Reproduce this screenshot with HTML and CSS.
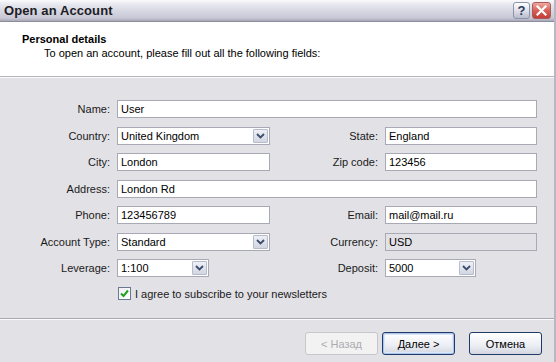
FILE: index.html
```html
<!DOCTYPE html>
<html>
<head>
<meta charset="utf-8">
<link rel="stylesheet" href="styles.css">
</head>
<body>
<div class="window">
  <div class="titlebar">
    <span class="title">Open an Account</span>
    <div class="tb-buttons">
      <span class="tb-btn help">?</span>
      <span class="tb-btn close">
        <svg width="11" height="11" viewBox="0 0 11 11"><path d="M1.5 1.5 L9.5 9.5 M9.5 1.5 L1.5 9.5" stroke="#fff" stroke-width="2.2" stroke-linecap="square"/></svg>
      </span>
    </div>
  </div>
  <div class="header">
    <div class="h-title">Personal details</div>
    <div class="h-sub">To open an account, please fill out all the following fields:</div>
  </div>
  <div class="body">
    <div class="form">
      <label class="lbl">Name:</label>
      <div class="field span3">User</div>

      <label class="lbl">Country:</label>
      <div class="field combo">United Kingdom<span class="arrow"><svg width="9" height="6" viewBox="0 0 9 6"><path d="M1 1 L4.5 4.5 L8 1" fill="none" stroke="#3c4c6c" stroke-width="1.8"/></svg></span></div>
      <label class="lbl">State:</label>
      <div class="field">England</div>

      <label class="lbl">City:</label>
      <div class="field">London</div>
      <label class="lbl">Zip code:</label>
      <div class="field">123456</div>

      <label class="lbl">Address:</label>
      <div class="field span3">London Rd</div>

      <label class="lbl">Phone:</label>
      <div class="field">123456789</div>
      <label class="lbl">Email:</label>
      <div class="field">mail@mail.ru</div>

      <label class="lbl">Account Type:</label>
      <div class="field combo">Standard<span class="arrow"><svg width="9" height="6" viewBox="0 0 9 6"><path d="M1 1 L4.5 4.5 L8 1" fill="none" stroke="#3c4c6c" stroke-width="1.8"/></svg></span></div>
      <label class="lbl">Currency:</label>
      <div class="field disabled">USD</div>

      <label class="lbl">Leverage:</label>
      <div class="cell"><div class="field combo short">1:100<span class="arrow"><svg width="9" height="6" viewBox="0 0 9 6"><path d="M1 1 L4.5 4.5 L8 1" fill="none" stroke="#3c4c6c" stroke-width="1.8"/></svg></span></div></div>
      <label class="lbl">Deposit:</label>
      <div class="cell"><div class="field combo deposit">5000<span class="arrow"><svg width="9" height="6" viewBox="0 0 9 6"><path d="M1 1 L4.5 4.5 L8 1" fill="none" stroke="#3c4c6c" stroke-width="1.8"/></svg></span></div></div>
    </div>
    <div class="agree">
      <span class="checkbox"><svg width="11" height="11" viewBox="0 0 11 11"><path d="M2 5.5 L4.5 8 L9 2.5" fill="none" stroke="#21a121" stroke-width="2"/></svg></span>
      <span>I agree to subscribe to your newsletters</span>
    </div>
  </div>
  <div class="footer">
    <button class="btn disabled">&lt; Назад</button>
    <button class="btn default">Далее &gt;</button>
    <button class="btn cancel">Отмена</button>
  </div>
</div>
</body>
</html>
```

FILE: styles.css
```css
html, body {
  margin: 0;
  padding: 0;
}
body {
  width: 556px;
  height: 362px;
  overflow: hidden;
  font-family: "Liberation Sans", Arial, sans-serif;
  font-size: 11px;
  color: #000;
}
.window {
  width: 556px;
  height: 362px;
  background: #e2e1e6;
  display: flex;
  flex-direction: column;
  box-sizing: border-box;
  border-right: 2px solid #b8b8c4;
}
.titlebar {
  height: 22px;
  box-sizing: border-box;
  display: flex;
  align-items: center;
  justify-content: space-between;
  padding: 0 4px 0 4px;
  background: linear-gradient(#fbfbfd 0%, #e8e8f0 20%, #d6d6e2 55%, #c8c8d6 85%, #a8a8b8 100%);
  border-bottom: 1px solid #8c8c9c;
}
.title {
  font-weight: bold;
  font-size: 13px;
  color: #1c1c24;
  letter-spacing: 0.1px;
}
.tb-buttons {
  display: flex;
  gap: 2px;
  margin-right: -1px;
}
.tb-btn {
  width: 17px;
  height: 17px;
  box-sizing: border-box;
  border-radius: 3px;
  display: flex;
  align-items: center;
  justify-content: center;
}
.help {
  background: linear-gradient(#ffffff, #dcdde8 55%, #b8bccc);
  border: 1px solid #8d94a8;
  color: #2c3a5c;
  font-weight: bold;
  font-size: 13px;
}
.close {
  width: 19px;
  background: linear-gradient(#f0a8a0, #d86058 50%, #c23c34);
  border: 1px solid #a85a5a;
}
.header {
  height: 55px;
  box-sizing: border-box;
  background: #fff;
  padding: 10px 0 0 22px;
  line-height: 14px;
  border-bottom: 1px solid #b4b4bc;
  box-shadow: 0 1px 0 #fafafa;
}
.h-title {
  font-weight: bold;
}
.h-sub {
  padding-left: 22px;
}
.body {
  padding-top: 23px;
  flex: 1;
}
.form {
  display: grid;
  grid-template-columns: 117px 153px 115px 152px;
  grid-auto-rows: 18px;
  row-gap: 8.5px;
}
.lbl {
  text-align: right;
  padding-right: 7px;
  line-height: 18px;
  color: #1a1a1a;
}
.form .lbl:nth-of-type(odd) {
}
.field {
  box-sizing: border-box;
  height: 18px;
  background: #fff;
  border: 1px solid #a7aab4;
  padding-left: 3px;
  line-height: 16px;
  display: flex;
  align-items: center;
  position: relative;
}
.span3 {
  grid-column: 2 / 5;
}
.disabled.field {
  background: #e2e1e6;
}
.combo {
  padding-right: 0;
}
.arrow {
  margin-left: auto;
  width: 15px;
  height: 14px;
  margin-right: 1px;
  box-sizing: border-box;
  border: 1px solid #b6bccb;
  border-radius: 1px;
  background: linear-gradient(#eef0f6, #d2d6e2);
  display: flex;
  align-items: center;
  justify-content: center;
}
.cell {
  display: flex;
}
.short {
  width: 92px;
}
.deposit {
  width: 91px;
}
.agree {
  display: flex;
  align-items: center;
  gap: 4px;
  margin: 10px 0 0 118px;
  color: #1a1a1a;
}
.checkbox {
  width: 13px;
  height: 13px;
  box-sizing: border-box;
  border: 1px solid #6a7890;
  background: linear-gradient(135deg, #f0f0f4, #ffffff);
  display: flex;
  align-items: center;
  justify-content: center;
}
.footer {
  height: 44px;
  box-sizing: border-box;
  border-top: 1px solid #a8a8b0;
  box-shadow: inset 0 1px 0 #fafafc;
  display: flex;
  justify-content: flex-end;
  align-items: flex-start;
  padding: 13px 12px 0 0;
}
.btn {
  font-family: "Liberation Sans", Arial, sans-serif;
  font-size: 11px;
  width: 73px;
  height: 23px;
  box-sizing: border-box;
  border-radius: 3px;
  border: 1px solid #1e3a68;
  background: linear-gradient(#ffffff, #eceef4 60%, #d4d6e0);
  color: #000;
  padding: 0;
  margin-left: 4px;
}
.btn.disabled {
  border-color: #c6c6cc;
  background: #f2f2f2;
  color: #acacb0;
}
.btn.default {
  box-shadow: inset 0 0 0 1px #aec4ea, inset 0 0 0 2px #dbe6f8;
}
.btn.cancel {
  margin-left: 14px;
}
```
